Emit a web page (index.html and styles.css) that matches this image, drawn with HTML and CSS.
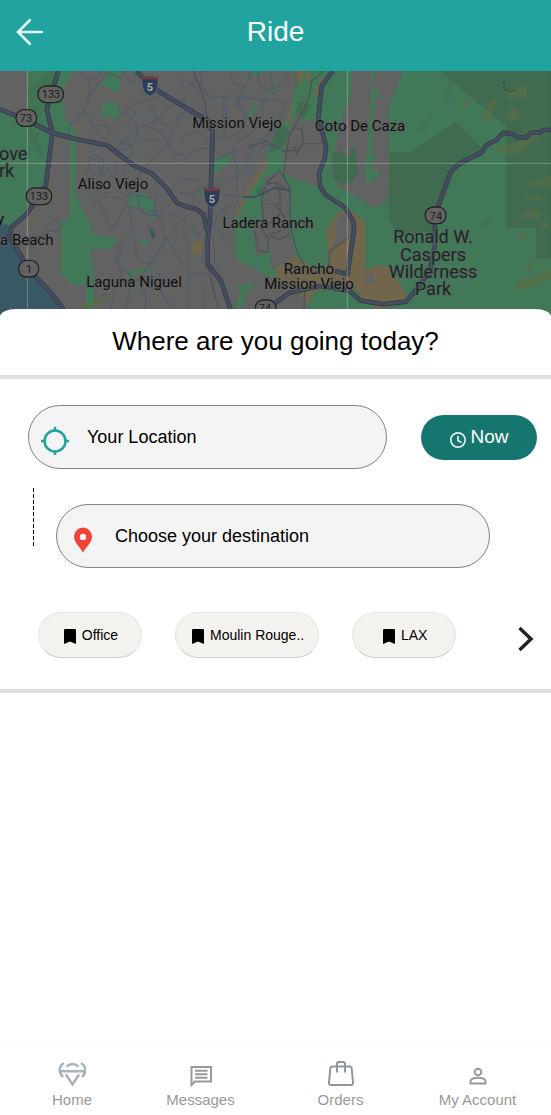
FILE: index.html
```html
<!DOCTYPE html>
<html lang="en">
<head>
<meta charset="utf-8">
<meta name="viewport" content="width=device-width, initial-scale=1">
<title>Ride</title>
<link rel="stylesheet" href="styles.css">
</head>
<body>
<header class="topbar">
  <button class="back" type="button" aria-label="Back">
    <svg viewBox="0 0 28 28" width="28" height="28"><path d="M14 2 2 14l12 12M3 14h23"/></svg>
  </button>
  <h1 class="topbar-title">Ride</h1>
</header>

<div class="map">
  <svg class="map-art" viewBox="0 0 551 245" preserveAspectRatio="xMidYMid slice" role="img" aria-label="Map of Mission Viejo">
    <g transform="scale(.33333)">
      <!-- west: Laguna and Aliso Viejo -->
      <g>
        <path class="park" d="M83 0H222L185 60l12 60-8 40-34 12-5 20-6 110-9 48-55 50-5 30-35 40H0V115l50 20 33 25z"/>
        <path class="forest" d="M83 60l60-60h35l-35 90-20 50-40-10zM85 160l30 30 10 70-40-60z" opacity=".5"/>
        <path class="park" d="M155 185l40-42 33 30v205l45 84v26l82 14-25 33-60-1 13 90-2 100h-25l3-82h-45l-31-37V445h27V188z"/>
        <path class="park" d="M307 25l53 2v30l-53-12zM308 95h35l15 15v44l-22-16-30-2zM318 0h40v50l-20 16-20-30zM388 372l40-8 30 28 12 42-8 14-22-32-52-14zM425 500l22 12-5 12-22-4zM385 600l65-10v10l-52 12-5 42h-10z"/>
        <path class="dry" d="M232 165l10-2-10 38z"/>
        <path class="scrub" d="M85 465l45-25-10-2-45 22zM150 350l15-20-8 74-12 0zM235 710l90-45-5 30-60 20z"/>
        <path class="water" d="M0 455l28 8 5 50 60 90 62 75 45 57H0zM443 460l25 30-10 16z"/>
        <g class="street">
          <path d="M240 0Q265 35 295 15L305 0M270 10L265 80Q262 120 235 135T205 195M265 80L310 20Q330 0 345 15T380 0M375 0Q375 40 425 35T480 60"/>
          <path d="M245 112Q265 130 275 160Q330 175 345 150T375 125Q420 160 410 195T365 240L330 225M275 160Q290 200 325 205M310 160Q350 210 400 230V245L380 265"/>
          <path d="M375 125Q400 95 430 90T480 75M410 120Q380 150 385 180T350 225M555 85Q520 95 500 120T430 165T385 225M430 165Q490 175 500 210T555 255"/>
          <path d="M555 120Q530 160 515 190T470 250T405 330M450 95Q470 150 495 160T540 130M425 200Q450 215 500 205"/>
          <path d="M270 265Q280 245 300 255T305 310Q290 325 275 300T270 265M280 270Q290 250 297 270T295 310M265 300Q255 330 280 350T330 365M320 290Q340 330 365 325T410 350"/>
          <path d="M270 380Q290 400 300 390L325 455Q340 475 350 455L370 415Q390 400 440 425T555 420M345 270Q355 300 340 310M380 280Q365 310 375 345T420 360"/>
          <path d="M310 375L350 380Q385 385 390 425T400 490L355 525L345 570L395 615L385 680L370 720M375 375H430Q460 390 475 375L520 365M410 335L415 400Q440 450 465 425V350"/>
          <path d="M510 400Q480 430 450 420M470 430Q500 470 490 520L450 580L400 640M555 440L500 500L460 570Q430 590 410 555L400 490M500 500L555 590M370 520Q350 560 360 590T350 640M330 720L345 665L300 675M430 650Q450 690 420 735M480 600Q470 650 500 690L530 735"/>
          <path d="M95 495L85 515L103 540M75 500L125 495L130 475L165 445L185 455L182 475L150 480L125 500"/>
        </g>
      </g>

      <!-- centre: Mission Viejo and Ladera Ranch -->
      <g transform="translate(540 0)">
        <path class="park" d="M355 0H1120V735H370L385 700L400 665L340 650L280 625L165 560V440L200 360L262 285L260 245L305 170L330 120z"/>
        <path class="land" d="M375 75L335 150L325 190L310 235V305L360 330L412 345L428 290L430 220L415 150L345 145L370 135zM515 0H670L625 110V380L585 412L540 385L475 345L452 300L460 245L475 190L495 115L515 70z"/>
        <path class="land" d="M252 320L300 298L330 355L326 460L345 555L290 595L273 590L268 500L262 545L230 555L215 475L245 460L250 420z"/>
        <path class="forest" d="M290 170L315 165L330 190L310 225L262 250zM355 90L395 100L370 140L345 135zM455 250L480 240L510 258V230L525 235L535 300L520 330L488 343L460 325zM362 0H345L345 60L365 20zM225 355L250 345L248 385z"/>
        <path class="park" d="M210 0H245V10L225 15zM240 85L310 28L290 55zM195 145L225 92L232 100L212 140zM103 267L150 252V275L125 290L103 315zM53 352L75 360V385zM160 648L230 635L200 665L190 705L160 715L185 660z"/>
        <path class="dry" d="M345 555L290 590L280 635L340 650L385 700L400 665L440 650L555 660V450L500 412L465 435L440 480L445 585L415 600zM165 440L200 358L265 262L262 285L205 370L175 440zM40 512L75 510L68 550L35 548zM340 60L330 160L320 155L335 90zM350 0H375L360 40L350 35zM425 20L440 25L410 75L400 70zM375 5L393 0L385 40z"/>
        <path class="land" d="M480 433L505 425L525 455L520 485L450 545L470 495L465 455z"/>
        <g class="street">
          <path d="M0 25L50 50Q75 55 90 80L165 75L235 85L320 90M0 60Q30 50 45 25T80 0M70 0Q50 35 80 70T85 110M150 0L160 35L190 45L180 75Q170 110 200 130M215 0L195 50M235 0Q230 50 260 55T320 25V0"/>
          <path d="M0 130Q30 120 40 90M10 85L30 130L45 135M0 200L45 180Q70 185 90 215M60 110L95 145Q140 160 130 110M135 75Q120 110 145 130M170 75Q160 105 200 130M0 270Q20 265 30 250T70 232L110 235"/>
          <path d="M105 265L180 235Q240 200 290 235M240 85Q260 120 235 160T165 215Q155 250 172 300V400M320 90Q300 140 290 165T225 215L180 310L105 350M260 215L205 275L195 310L225 270M200 130L180 180Q140 210 110 200"/>
          <path d="M0 320L60 330M0 365Q40 375 80 345M140 100L130 200M0 470Q30 470 55 490L80 460M25 735V520L10 480M100 470Q130 480 140 518M100 470L110 440Q120 415 150 405M75 500L65 560L80 590M95 490Q110 530 100 610M20 610L80 605M70 640L75 735M125 620L165 735M270 0L280 50Q240 90 250 110"/>
          <path d="M110 370Q150 370 170 378H200M330 350V380L320 400M250 400L300 398"/>
        </g>
        <path class="trail" d="M430 0L395 30L390 70L370 120L330 190L320 240L310 310L330 355V460L350 540L375 585M40 0L75 90L85 180M205 230L260 210L310 240L350 238L370 218H430M345 170L365 175L370 215L350 250L340 225M255 340L300 298M255 340L290 335L315 350M300 300L330 350M255 345L245 385L250 440L240 470L265 500V545L235 540L225 480M290 335L300 370V430L255 470M285 400L315 440L300 480L270 490M330 490L300 505L270 495M520 490L450 540L445 590M375 655L370 735M85 590L120 735"/>
      </g>

      <!-- east: Caspers Wilderness -->
      <g transform="translate(1080 0)">
        <path class="forest" d="M240 0H573V565H528V470H438V165zM88 243H155L230 190L290 152L370 235L290 280L250 350L228 405V480L110 490L85 440z"/>
        <path class="forest" d="M250 75L270 30L285 55L260 100zM165 180L220 120L195 180zM355 460L410 430L380 470z" opacity=".4"/>
        <path class="park" d="M35 0L45 10L38 45L70 85L45 80L40 160L35 250L50 265L32 275L35 300L55 295V315L20 345L15 290L22 250L30 120z"/>
        <path class="dry" d="M0 605L50 583L90 590L145 680L100 705L60 718L0 685z"/>
        <path class="land" d="M12 628L38 600L45 645z"/>
        <path class="scrub" d="M303 88L343 83L310 115zM360 150L375 110L405 75L408 100L385 150zM440 60L500 42V80L438 80zM433 130L460 110L485 130L470 152L440 145zM388 230L470 215L515 165L540 195L510 215L500 235L460 255zM487 340L573 315V348zM478 372L530 374L555 385L525 390zM475 440L500 415L545 420L535 445zM465 490L500 485L495 510zM538 465L560 450L573 475zM490 590L525 563L515 600zM470 630L573 595V625L500 655L465 655z"/>
      </g>

      <!-- highways -->
      <g class="highways">
        <path id="roads" d="M0 115L50 135L105 160L155 185L240 207L322 223L400 283L455 307L500 352L532 397L560 407L590 415L610 430L622 480M175 0L140 115L157 185L137 345L80 430L35 468L28 495L90 600L150 662L195 720M410 0L450 45L540 100L625 150L638 180L630 440L623 510V580L663 630L693 720M998 0L965 45L955 140L978 225L975 260L957 305L960 345L975 370L1035 410L1060 450L1062 480L1042 610L1005 600M820 700L870 665L960 645L1050 660L1080 688L1150 700L1218 692L1250 655L1290 600L1305 520V430L1353 303L1375 280L1447 243L1458 223L1490 207L1510 185L1540 190L1553 199H1580L1592 185H1620L1630 177H1653"/>
        <use href="#roads" class="fill"/>
      </g>
      <path class="artery" d="M730 378H765L825 350L870 358"/>
      <path class="dashes" d="M1511 30l2 25 20 8 18-8"/>
      <path class="grid" d="M82 0v735M1042 0v735M0 277h1653"/>

      <!-- route shields -->
      <g class="shield">
        <rect x="114" y="45" width="76" height="50" rx="24"/>
        <rect x="48" y="116" width="62" height="50" rx="24"/>
        <rect x="79" y="351" width="76" height="50" rx="24"/>
        <rect x="56" y="568" width="60" height="50" rx="24"/>
        <rect x="766" y="687" width="62" height="50" rx="24"/>
        <rect x="1276" y="408" width="62" height="50" rx="24"/>
      </g>
      <g id="interstate">
        <path class="shield-blue" d="M426 22h48c2 28-4 45-24 54-20-9-26-26-24-54z"/>
        <path class="shield-red" d="M425 15l8 3 9-4 8 4 8-4 9 4 8-3v10h-50z"/>
      </g>
      <use href="#interstate" x="186" y="335"/>
    </g>
    <g class="route-text">
      <text x="51" y="27">133</text><text x="26" y="51">73</text>
      <text x="39" y="129">133</text><text x="29" y="202">1</text>
      <text x="265" y="241">74</text><text x="436" y="149">74</text>
      <text class="light" x="150" y="20">5</text><text class="light" x="212" y="132">5</text>
    </g>
    <g class="place">
      <text x="237" y="57">Mission Viejo</text>
      <text x="360" y="60">Coto De Caza</text>
      <text x="113" y="118">Aliso Viejo</text>
      <text x="268" y="157">Ladera Ranch</text>
      <text x="134" y="216">Laguna Niguel</text>
      <text x="309" y="203">Rancho</text>
      <text x="309" y="218">Mission Viejo</text>
      <text class="start" x="0" y="174">a Beach</text>
      <text class="start" x="-3" y="153">y</text>
    </g>
    <g class="place park-name">
      <text class="start" x="-1" y="89">ove</text>
      <text class="start" x="-1" y="106">rk</text>
      <text x="433" y="172">Ronald W.</text>
      <text x="433" y="190">Caspers</text>
      <text x="433" y="207">Wilderness</text>
      <text x="433" y="224">Park</text>
    </g>
  </svg>
</div>

<main class="sheet">
  <h2 class="sheet-title">Where are you going today?</h2>

  <form class="trip">
    <div class="from-row">
      <label class="field">
        <svg class="field-icon target" viewBox="0 0 28 28" width="28" height="28"><circle cx="14" cy="14" r="10.5"/><path d="M14 0v4.500M14 23.500V28M0 14h4.500M23.500 14H28"/></svg>
        <input type="text" placeholder="Your Location" aria-label="Your Location">
      </label>
      <button class="now" type="button">
        <svg viewBox="0 0 18 18" width="18" height="18"><circle cx="9" cy="9" r="7.200"/><path d="M9 5v4.500l3.500 2"/></svg>
        <span>Now</span>
      </button>
    </div>
    <div class="to-row">
      <span class="link-line"></span>
      <label class="field">
        <svg class="field-icon" viewBox="0 0 28 28" width="28" height="28"><path fill="#f44336" fill-rule="evenodd" d="M14 1.500a9 9 0 0 0-9 9c0 6 6 10.500 9 16 3-5.500 9-10 9-16a9 9 0 0 0-9-9zm0 6.200a3.200 3.200 0 1 1 0 6.400 3.200 3.200 0 0 1 0-6.400z"/></svg>
        <input type="text" placeholder="Choose your destination" aria-label="Choose your destination">
      </label>
    </div>
  </form>

  <div class="saved">
    <button class="chip" type="button"><svg viewBox="0 0 12 15" width="12" height="15"><path d="M0 1.200Q0 0 1.200 0h9.600Q12 0 12 1.200V15l-6-2.500L0 15z"/></svg>Office</button>
    <button class="chip" type="button"><svg viewBox="0 0 12 15" width="12" height="15"><path d="M0 1.200Q0 0 1.200 0h9.600Q12 0 12 1.200V15l-6-2.500L0 15z"/></svg>Moulin Rouge..</button>
    <button class="chip" type="button"><svg viewBox="0 0 12 15" width="12" height="15"><path d="M0 1.200Q0 0 1.200 0h9.600Q12 0 12 1.200V15l-6-2.500L0 15z"/></svg>LAX</button>
    <button class="more" type="button" aria-label="More saved places">
      <svg viewBox="0 0 16 26" width="16" height="26"><path d="M1.500 2l11.500 11L1.500 24"/></svg>
    </button>
  </div>
</main>

<nav class="tabs">
  <a class="tab" href="#home">
    <svg class="slate" viewBox="0 0 28 28" width="28" height="28"><path d="M6 3C0.500 6 0.500 13 5 17M23 3c5.500 3 5.500 10 1 14M2 11.200h25M8.500 6.500q6-5 12 0M8 14.500l6.500 10 6.500-10"/></svg>
    <span>Home</span>
  </a>
  <a class="tab" href="#messages">
    <svg viewBox="0 0 28 28" width="28" height="28"><path d="M4.500 25V7H24v14.500H8z"/><path d="M8 10.700h12.500M8 14.200h12.500M8 17.700h12.500"/></svg>
    <span>Messages</span>
  </a>
  <a class="tab" href="#orders">
    <svg class="slate dark" viewBox="0 0 28 28" width="28" height="28"><path d="M5.500 6.500h17q2 0 2.200 2l1.300 14q.2 2.500-2.300 2.500H4.300Q1.800 25 2 22.500l1.300-14q.2-2 2.200-2zM10 12.500V4q0-2 2-2h4q2 0 2 2v8.500"/></svg>
    <span>Orders</span>
  </a>
  <a class="tab" href="#account">
    <svg viewBox="0 0 28 28" width="28" height="28"><circle cx="14" cy="12" r="3.300"/><path d="M6.500 23.500v-2c0-5 15-5 15 0v2z"/></svg>
    <span>My Account</span>
  </a>
</nav>
</body>
</html>
```

FILE: styles.css
```css
* { box-sizing: border-box; }

body {
  margin: 0;
  min-height: 100vh;
  display: flex;
  flex-direction: column;
  background: #fff;
  color: #000;
  font-family: "Liberation Sans", Arial, sans-serif;
}

button {
  border: 0;
  padding: 0;
  background: none;
  color: inherit;
  font: inherit;
  cursor: pointer;
}

svg { display: block; flex: none; }

/* Header */
.topbar {
  display: grid;
  grid-template-columns: 28px 1fr 28px;
  align-items: center;
  padding: 16px 16px 23px;
  background: #21a39f;
  color: #fff;
}
.back svg { fill: none; stroke: #e6f6f5; stroke-width: 2.5; stroke-linecap: round; }
.topbar-title {
  margin: 0;
  font-size: 28px;
  line-height: 32px;
  font-weight: 400;
  text-align: center;
}

/* Map */
.map { height: 245px; background: #626262; }
.map-art { width: 100%; height: 100%; }
.park { fill: #417857; }
.forest { fill: #416b50; }
.land { fill: #626262; }
.dry { fill: #71664c; }
.scrub { fill: #5b6d45; opacity: .65; }
.water { fill: #385964; }
.street { fill: none; stroke: #525d68; stroke-width: 4; stroke-linejoin: round; }
.trail { fill: none; stroke: #505257; stroke-width: 4; stroke-linejoin: round; }
.highways { fill: none; stroke: #363d4a; stroke-width: 14; stroke-linejoin: round; }
.fill { stroke: #454c5f; stroke-width: 9; }
.artery { fill: none; stroke: #424f62; stroke-width: 6; }
.dashes { fill: none; stroke: #283b35; stroke-width: 3; stroke-dasharray: 7 6; }
.grid { fill: none; stroke: #fff; stroke-opacity: .28; stroke-width: 3; }
.shield { fill: #626262; stroke: #242424; stroke-width: 4; }
.shield-blue { fill: #2c3e57; stroke: #777; stroke-width: 2; }
.shield-red { fill: #733b3b; }
.route-text { font: 400 11px Roboto, sans-serif; fill: #1b1b1b; text-anchor: middle; }
.route-text .light { fill: #aaa; font-weight: 700; }
.place {
  font: 400 15px Roboto, sans-serif;
  fill: #101010;
  stroke: #626262;
  stroke-width: 2px;
  stroke-opacity: .7;
  paint-order: stroke;
  text-anchor: middle;
}
.park-name { font-size: 18px; fill: #142b25; }
.place .start { text-anchor: start; }

/* Sheet */
.sheet {
  position: relative;
  flex: 1;
  margin-top: -7px;
  border-radius: 16px 16px 0 0 / 8px 8px 0 0;
  background: #fff;
}
.sheet-title {
  margin: 0;
  padding: 16px 16px 17px;
  border-bottom: 4px solid #dfdfdf;
  font-size: 26px;
  line-height: 33px;
  font-weight: 400;
  text-align: center;
}
.trip { padding-top: 26px; }
.from-row {
  display: flex;
  align-items: center;
  gap: 34px;
  padding: 0 14px 0 28px;
}
.field {
  flex: 1;
  min-width: 0;
  height: 64px;
  display: flex;
  align-items: center;
  gap: 18px;
  padding: 0 24px 0 12px;
  border: 1px solid #828282;
  border-radius: 32px;
  background: #f4f4f4;
}
.field-icon { margin-top: 7px; }
.target { fill: none; stroke: #21a39f; stroke-width: 2.5; }
.field input {
  flex: 1;
  min-width: 0;
  padding: 0;
  border: 0;
  outline: 0;
  background: none;
  color: #000;
  font: inherit;
  font-size: 18px;
  line-height: 24px;
}
.field input::placeholder { color: #000; opacity: 1; }
.now {
  display: flex;
  align-items: center;
  justify-content: center;
  gap: 3px;
  width: 116px;
  height: 45px;
  border-radius: 23px;
  background: #15756f;
  color: #fff;
  font-size: 19px;
  line-height: 24px;
}
.now svg { margin-top: 5px; fill: none; stroke: #e3efee; stroke-width: 1.7; }
.to-row {
  display: flex;
  align-items: flex-start;
  gap: 22px;
  margin-top: 19px;
  padding: 0 61px 0 33px;
}
.to-row .field { margin-top: 16px; }
.link-line {
  width: 1px;
  height: 58px;
  background: repeating-linear-gradient(#000 0 4px, transparent 4px 6px);
}

/* Saved places */
.saved {
  display: flex;
  align-items: center;
  gap: 33px;
  padding: 44px 17px 31px 38px;
  border-bottom: 4px solid #dfdfdf;
}
.chip {
  display: flex;
  align-items: center;
  justify-content: center;
  gap: 6px;
  height: 46px;
  min-width: 104px;
  padding: 0 14px 0 16px;
  border: 1px solid #e6e5e2;
  border-bottom-color: #cfcecb;
  border-radius: 23px;
  background: #f3f2ee;
  font-size: 14px;
  line-height: 20px;
  white-space: nowrap;
}
.chip svg { margin-top: 3px; }
.more { margin: 8px 0 0 auto; }
.more svg { fill: none; stroke: #222; stroke-width: 3.5; }

/* Bottom navigation */
.tabs {
  display: grid;
  grid-template-columns: 144fr 113fr 167fr 107fr;
  padding: 14px 20px 6px 0;
  border-top: 1px solid #fafafa;
}
.tab {
  display: flex;
  flex-direction: column;
  align-items: center;
  gap: 3px;
  color: #999;
  font-size: 15px;
  line-height: 18px;
  text-decoration: none;
  white-space: nowrap;
}
.tab svg { fill: none; stroke: #999; stroke-width: 2; }
.tab .slate { stroke: #a8b1bf; stroke-width: 2.5; }
.tab .dark { stroke: #8b96a4; stroke-width: 2; }
```
